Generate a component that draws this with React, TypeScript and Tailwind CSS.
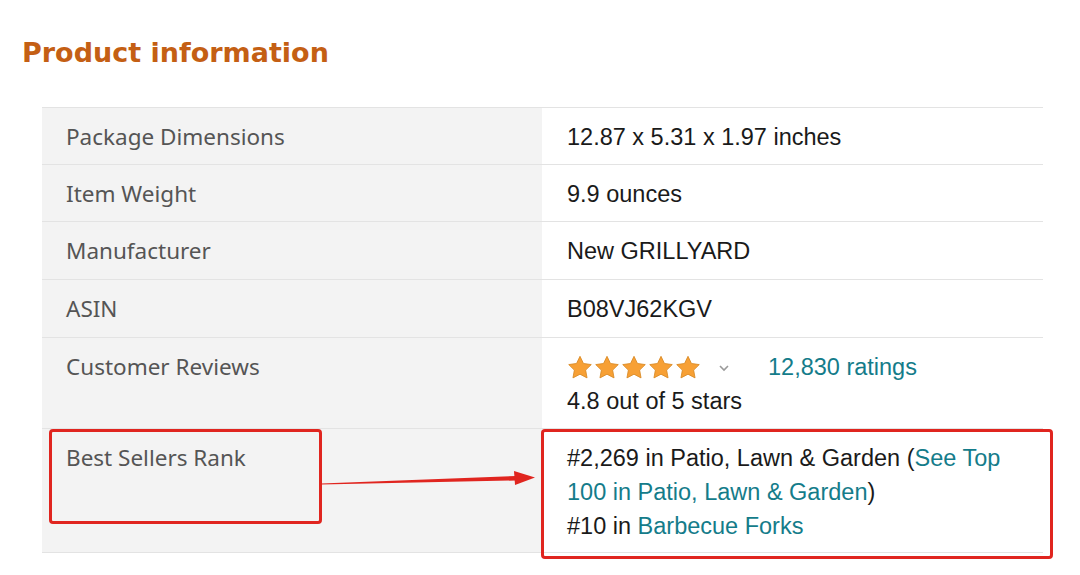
import React from "react";

const label = "text-[22.5px] text-[#555555] leading-[34px]";
const value = "text-[23.5px] text-[#1a1a1a] leading-[34px]";
const link = "text-[#147c8a]";

function Star() {
  return (
    <svg width="26" height="25" viewBox="0 0 24 23">
      <path
        d="M12 1.2l3.2 6.6 7.2 1-5.2 5.1 1.3 7.2L12 17.7l-6.5 3.4 1.3-7.2L1.6 8.8l7.2-1z"
        fill="#f7a035"
        stroke="#d98a25"
        strokeWidth="0.8"
        strokeLinejoin="round"
      />
    </svg>
  );
}

function Row({
  h,
  left,
  right,
}: {
  h: string;
  left: React.ReactNode;
  right: React.ReactNode;
}) {
  return (
    <div className={`grid grid-cols-[500px_501px] border-b border-[#e3e3e3] ${h}`}>
      <div className="bg-[#f3f3f3] pl-[24px] pt-[12px]">{left}</div>
      <div className="pl-[25px] pt-[12px]">{right}</div>
    </div>
  );
}

export default function App() {
  const sans = { fontFamily: '"Noto Sans", "Open Sans", sans-serif' };
  const arial = { fontFamily: '"Liberation Sans", Arial, sans-serif' };
  return (
    <div className="relative w-[1080px] h-[575px] bg-white overflow-hidden">
      <h2
        className="pl-[22px] pt-[35px] text-[27px] font-bold leading-[36px] text-[#c45f14]"
        style={{ fontFamily: '"DejaVu Sans", Verdana, sans-serif' }}
      >
        Product information
      </h2>
      <div className="ml-[42px] mt-[36px] w-[1001px] border-t border-[#e3e3e3]">
        <Row
          h="h-[57px]"
          left={<div className={label} style={sans}>Package Dimensions</div>}
          right={<div className={value} style={arial}>12.87 x 5.31 x 1.97 inches</div>}
        />
        <Row
          h="h-[57px]"
          left={<div className={label} style={sans}>Item Weight</div>}
          right={<div className={value} style={arial}>9.9 ounces</div>}
        />
        <Row
          h="h-[58px]"
          left={<div className={label} style={sans}>Manufacturer</div>}
          right={<div className={value} style={arial}>New GRILLYARD</div>}
        />
        <Row
          h="h-[58px]"
          left={<div className={label} style={sans}>ASIN</div>}
          right={<div className={value} style={arial}>B08VJ62KGV</div>}
        />
        <Row
          h="h-[91px]"
          left={<div className={label} style={sans}>Customer Reviews</div>}
          right={
            <div className={value} style={arial}>
              <div className="flex items-center h-[34px]">
                <div className="flex gap-[1px]">
                  <Star />
                  <Star />
                  <Star />
                  <Star />
                  <Star />
                </div>
                <svg width="12" height="8" viewBox="0 0 12 8" className="ml-[17px] mt-[2px]">
                  <path d="M2 2l4 4 4-4" fill="none" stroke="#9a9a9a" strokeWidth="1.6" />
                </svg>
                <span className={`${link} ml-[38px]`}>12,830 ratings</span>
              </div>
              <div>4.8 out of 5 stars</div>
            </div>
          }
        />
        <Row
          h="h-[124px]"
          left={<div className={label} style={sans}>Best Sellers Rank</div>}
          right={
            <div className={`${value} whitespace-nowrap`} style={arial}>
              <div>
                #2,269 in Patio, Lawn &amp; Garden (<span className={link}>See Top</span>
              </div>
              <div>
                <span className={link}>100 in Patio, Lawn &amp; Garden</span>)
              </div>
              <div>
                #10 in <span className={link}>Barbecue Forks</span>
              </div>
            </div>
          }
        />
      </div>

      <div className="absolute left-[49px] top-[429px] w-[273px] h-[95px] border-[3px] border-[#e0251f] rounded-[4px]" />
      <div className="absolute left-[541px] top-[429px] w-[512px] h-[130px] border-[3px] border-[#e0251f] rounded-[4px]" />
      <svg
        className="absolute left-[318px] top-[466px]"
        width="222"
        height="24"
        viewBox="0 0 222 24"
      >
        <path d="M3 17.5 L198 10 L198 14.5 L3 18.5 Z" fill="#e0251f" />
        <path d="M196 5 L217 11.5 L197 19 Z" fill="#e0251f" />
      </svg>
    </div>
  );
}
